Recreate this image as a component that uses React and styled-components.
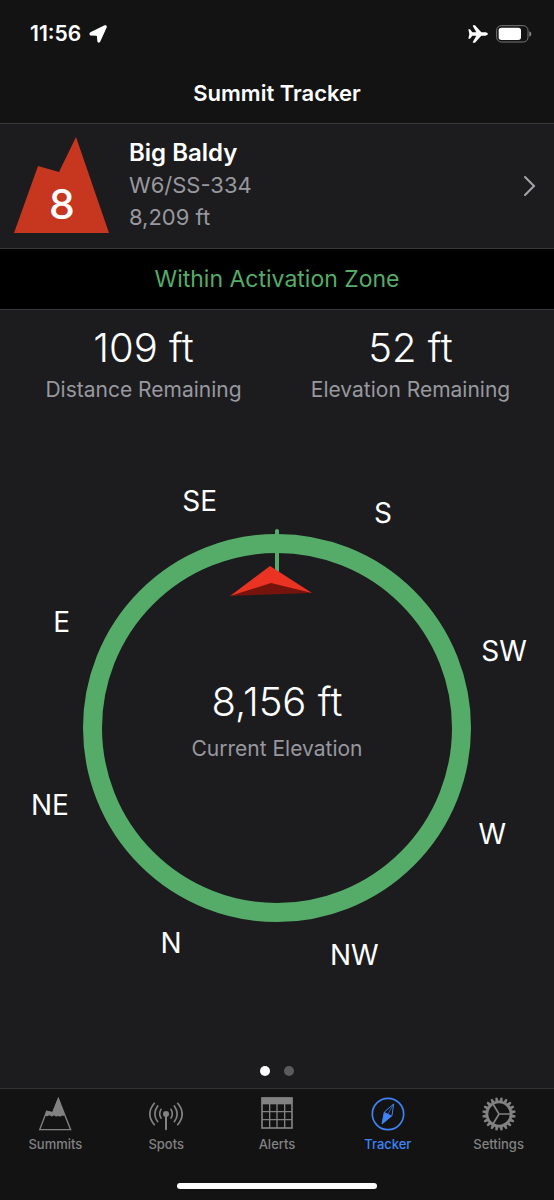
import React from "react";
import styled, { createGlobalStyle, css } from "styled-components";

const GlobalStyle = createGlobalStyle`
    * {
        box-sizing: border-box;
    }
    body {
        margin: 0;
        background: #1c1c1e;
        color: #ffffff;
        font-family: Inter, "Liberation Sans", sans-serif;
    }
    h1, h2, p, ul {
        margin: 0;
        padding: 0;
    }
`
const Page = styled.div`
    min-height: 100vh;
    display: flex;
    flex-direction: column;
`
const Header = styled.header`
    background: #131313;
    border-bottom: 1px solid #38383a;
`
const StatusBar = styled.div`
    display: flex;
    align-items: center;
    justify-content: space-between;
    height: 67px;
    padding: 0 22px 0 30px;
`
const StatusGroup = styled.div`
    display: flex;
    align-items: center;
    gap: 8px;
`
const Time = styled.span`
    font-size: 21px;
    font-weight: 600;
    line-height: 24px;
`
const Title = styled.h1`
    font-size: 22px;
    font-weight: 600;
    line-height: 28px;
    padding: 12px 16px 16px;
    text-align: center;
`
const SummitLink = styled.a`
    display: flex;
    align-items: center;
    gap: 20px;
    padding: 12px 14px;
    color: inherit;
    text-decoration: none;
`
const SummitInfo = styled.div`
    flex: 1;
    line-height: 32px;
    padding-bottom: 2px;
`
const SummitName = styled.h2`
    font-size: 24px;
    font-weight: 600;
    line-height: 32px;
`
const SummitMeta = styled.p`
    color: #98989f;
    font-size: 22px;
`
const Banner = styled.p`
    background: #000000;
    border-top: 1px solid #38383a;
    border-bottom: 1px solid #38383a;
    color: #55ac68;
    font-size: 23px;
    line-height: 28px;
    padding: 16px;
    text-align: center;
`
const Main = styled.main`
    flex: 1;
    display: flex;
    flex-direction: column;
`
const Stats = styled.section`
    display: grid;
    grid-template-columns: 1fr 1fr;
    padding: 12px 10px 0;
`
const Stat = styled.div`
    text-align: center;

    ${({$center}) => $center && css`
        display: grid;
        gap: 5px;
        padding-bottom: 15px;
    `}
`
const StatValue = styled.p`
    font-size: 40px;
    font-weight: 300;
    line-height: 52px;
`
const StatLabel = styled.p`
    color: #98989f;
    font-size: 21px;
    line-height: 32px;
`
const DialArea = styled.section`
    flex: 1;
    display: flex;
    align-items: center;
    justify-content: center;
    padding-bottom: 8px;
`
const Dial = styled.div`
    position: relative;
    width: 100%;
    max-width: 554px;
    aspect-ratio: 1;
    display: flex;
    align-items: center;
    justify-content: center;
`
const DialRing = styled.svg`
    position: absolute;
    inset: 0;
    width: 100%;
    height: 100%;
`
const DialLabel = styled.span`
    position: absolute;
    transform: translate(-50%, -50%);
    font-size: 28px;
    line-height: 32px;
`
const Dots = styled.div`
    display: flex;
    justify-content: center;
    gap: 14px;
    padding: 8px 0 12px;
`
const Dot = styled.button`
    width: 10px;
    height: 10px;
    padding: 0;
    border: none;
    border-radius: 50%;
    background: ${({$active}) => $active ? '#ffffff' : '#5b5b5e'};
`
const Footer = styled.footer`
    background: #131313;
    border-top: 1px solid #323232;
    padding-bottom: 11px;
`
const TabBar = styled.nav`
    display: grid;
    grid-template-columns: repeat(5, 1fr);
    padding: 8px 0 30px;
`
const Tab = styled.a`
    display: flex;
    flex-direction: column;
    align-items: center;
    gap: 4px;
    color: #828282;
    font-size: 13px;
    font-weight: 500;
    line-height: 18px;
    text-decoration: none;

    ${({$active}) => $active && css`
        color: #3f83f7;
    `}
`
const HomeIndicator = styled.div`
    width: 36%;
    height: 6px;
    margin: 0 auto;
    border-radius: 3px;
    background: #ffffff;
`

// bearings in degrees, clockwise from north
const points = [
    { name: 'N', bearing: 0 },
    { name: 'NE', bearing: 45 },
    { name: 'E', bearing: 90 },
    { name: 'SE', bearing: 135 },
    { name: 'S', bearing: 180 },
    { name: 'SW', bearing: 225 },
    { name: 'W', bearing: 270 },
    { name: 'NW', bearing: 315 },
];

const labelPosition = (bearing, heading) => {
    const angle = (bearing - heading) * Math.PI / 180;
    return {
        left: `${50 + 43.3 * Math.sin(angle)}%`,
        top: `${50 - 43.3 * Math.cos(angle)}%`
    };
}

const LocationIcon = () => (
    <svg width="18" height="18" viewBox="0 0 52 52" fill="#ffffff" aria-hidden="true">
        <path d="M45 1Q53 -1 51 7L32 49Q27 54 24 48L23 33Q23 31 21 31L4 30Q-2 27 4 21Z" />
    </svg>
)
const PlaneIcon = () => (
    <svg width="20" height="18" viewBox="0 0 60 54" fill="#ffffff" aria-hidden="true">
        <path d="M1 13H6L13 22H25L14 2Q14 1 16 1H21L40 22H52Q59 23 60 27Q59 31 52 32H40L21 53H16Q14 53 14 52L25 32H13L6 41H1L4 27Z" />
    </svg>
)
const BatteryIcon = () => (
    <svg width="36" height="18" viewBox="0 0 108 54" aria-hidden="true">
        <rect x="2" y="2" width="94" height="49" rx="14" fill="none" stroke="#77777a" strokeWidth="3" />
        <rect x="8" y="8" width="67" height="37" rx="8" fill="#ffffff" />
        <path d="M100 19Q106 21 106 27Q106 33 100 35Z" fill="#88888a" />
    </svg>
)
const SummitBadge = ({ points: score }) => (
    <svg width="95" height="100" viewBox="0 0 95 100" role="img" aria-label={`${score} points`}>
        <path d="M0 97L24 30L45 36L62 1L95 97Z" fill="#c7361f" />
        <text x="48" y="83" fill="#ffffff" fontSize="41" fontWeight="500" textAnchor="middle">{score}</text>
    </svg>
)
const Chevron = () => (
    <svg width="20" height="24" viewBox="0 0 20 24" fill="none" stroke="#a5a5aa" strokeWidth="2" strokeLinecap="round" aria-hidden="true">
        <path d="M5 3L14 12L5 21" />
    </svg>
)

const TabIcon = ({ children }) => (
    <svg width="34" height="34" viewBox="0 0 102 102" fill="none" stroke="currentColor" strokeWidth="5" aria-hidden="true">
        {children}
    </svg>
)
const SummitsIcon = () => (
    <TabIcon>
        <path d="M5 98L26 43L44 48L61 5L98 98Z" strokeWidth="4" />
        <path d="M21 55Q28 61 34 54Q41 62 48 55Q54 62 60 56Q67 62 73 55Q77 59 80 55L61 1L43 45L26 41Z" fill="currentColor" stroke="none" />
    </TabIcon>
)
const SpotsIcon = () => (
    <TabIcon>
        <circle cx="51" cy="51" r="9" fill="currentColor" stroke="none" />
        <path d="M51 51V97" strokeWidth="6" strokeLinecap="round" />
        <path d="M36 37Q28 50 36 63M66 37Q74 50 66 63M26 27Q9 51 26 74M76 27Q93 51 76 74M16 19Q-11 51 16 83M86 19Q113 51 86 83" strokeWidth="5" strokeLinecap="round" />
    </TabIcon>
)
const AlertsIcon = () => (
    <TabIcon>
        <rect x="6" y="3" width="90" height="90" />
        <path d="M5 2H97V22H5Z" fill="currentColor" stroke="none" />
        <path d="M29 20V93M51 20V93M74 20V93M6 44H96M6 68H96" strokeWidth="4" />
    </TabIcon>
)
const TrackerIcon = () => (
    <TabIcon>
        <circle cx="51" cy="51" r="47" />
        <path d="M68 21L40 45L33 81L63 56Z" strokeWidth="3" strokeLinejoin="round" />
        <path d="M40 45L63 56L33 81Z" fill="currentColor" stroke="none" />
        <path d="M68 21L51 51" strokeWidth="2" />
    </TabIcon>
)
const SettingsIcon = () => (
    <TabIcon>
        <circle cx="51" cy="51" r="36" strokeWidth="8" />
        {Array.from({ length: 20 }, (_, i) => (
            <path key={i} d="M46 13L48 1H54L56 13Z" fill="currentColor" stroke="none" transform={`rotate(${i * 18 + 9} 51 51)`} />
        ))}
        <path d="M51 51H86M51 51L33 21M51 51L33 81" />
    </TabIcon>
)

const tabs = [
    { name: 'Summits', Icon: SummitsIcon },
    { name: 'Spots', Icon: SpotsIcon },
    { name: 'Alerts', Icon: AlertsIcon },
    { name: 'Tracker', Icon: TrackerIcon },
    { name: 'Settings', Icon: SettingsIcon },
];

const App = () => {
    const [tab,setTab] = React.useState('Tracker');
    const [page,setPage] = React.useState(0);
    const heading = 153.8;

    return(
        <Page>
            <GlobalStyle />
            <Header>
                <StatusBar>
                    <StatusGroup>
                        <Time>11:56</Time>
                        <LocationIcon />
                    </StatusGroup>
                    <StatusGroup>
                        <PlaneIcon />
                        <BatteryIcon />
                    </StatusGroup>
                </StatusBar>
                <Title>Summit Tracker</Title>
            </Header>
            <SummitLink href="#summit">
                <SummitBadge points={8} />
                <SummitInfo>
                    <SummitName>Big Baldy</SummitName>
                    <SummitMeta>W6/SS-334</SummitMeta>
                    <SummitMeta>8,209 ft</SummitMeta>
                </SummitInfo>
                <Chevron />
            </SummitLink>
            <Banner>Within Activation Zone</Banner>
            <Main>
                <Stats>
                    <Stat>
                        <StatValue>109 ft</StatValue>
                        <StatLabel>Distance Remaining</StatLabel>
                    </Stat>
                    <Stat>
                        <StatValue>52 ft</StatValue>
                        <StatLabel>Elevation Remaining</StatLabel>
                    </Stat>
                </Stats>
                <DialArea>
                    <Dial>
                        <DialRing viewBox="0 0 554 554" aria-hidden="true">
                            <circle cx="277" cy="277" r="184.5" fill="none" stroke="#55ac68" strokeWidth="19" />
                            <path d="M277 80V122" stroke="#55ac68" strokeWidth="4" strokeLinecap="round" />
                            <path d="M270 115L312 142L271 138L230 145Z" fill="#ea3323" />
                            <path d="M271 132L312 142L230 145Z" fill="#75140c" />
                        </DialRing>
                        {points.map((item) => (
                            <DialLabel key={item.name} style={labelPosition(item.bearing, heading)}>
                                {item.name}
                            </DialLabel>
                        ))}
                        <Stat $center>
                            <StatValue>8,156 ft</StatValue>
                            <StatLabel>Current Elevation</StatLabel>
                        </Stat>
                    </Dial>
                </DialArea>
                <Dots>
                    {[0, 1].map((item) => (
                        <Dot
                            key={item}
                            type="button"
                            aria-label={`Page ${item + 1}`}
                            $active={page === item}
                            onClick={() => setPage(item)}
                        />
                    ))}
                </Dots>
            </Main>
            <Footer>
                <TabBar>
                    {tabs.map(({ name, Icon }) => (
                        <Tab
                            key={name}
                            href={`#${name.toLowerCase()}`}
                            $active={tab === name}
                            onClick={() => setTab(name)}
                        >
                            <Icon />
                            {name}
                        </Tab>
                    ))}
                </TabBar>
                <HomeIndicator />
            </Footer>
        </Page>
    );
}
export default App;
